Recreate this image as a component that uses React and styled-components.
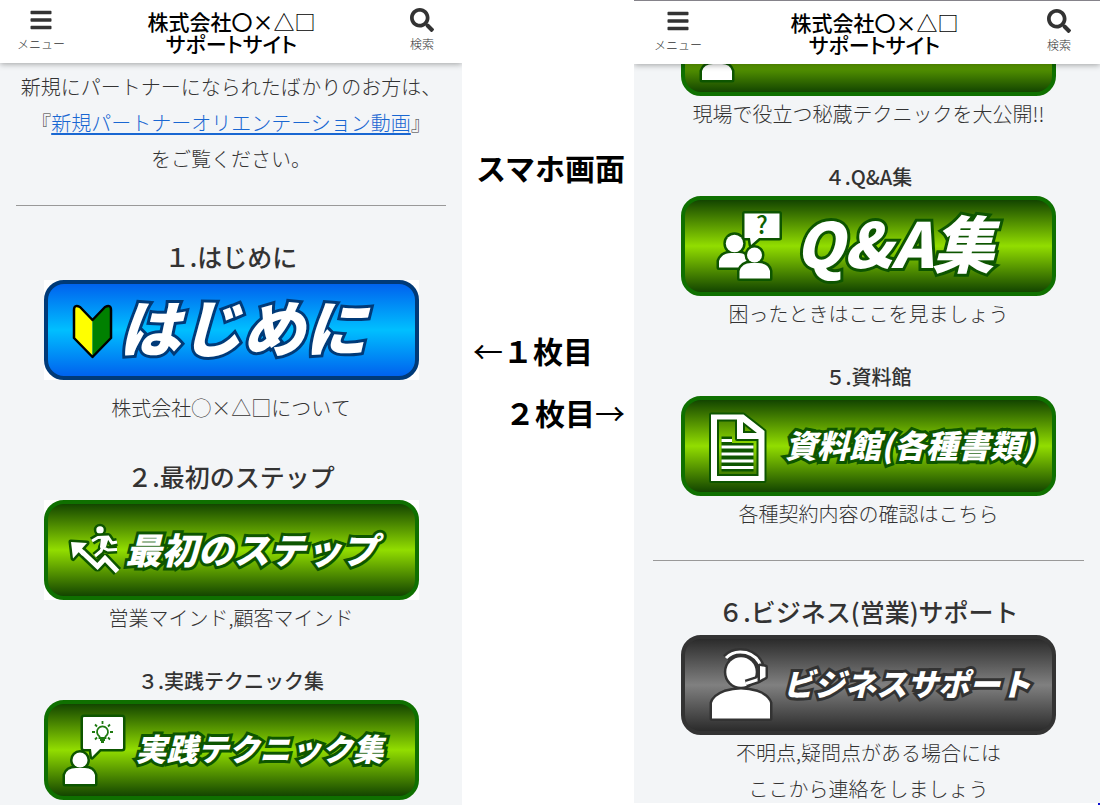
import React from 'react';
import styled, { createGlobalStyle, css } from 'styled-components';
import { FaBars, FaSearch } from 'react-icons/fa';

const GlobalStyle = createGlobalStyle`
  * {
    box-sizing: border-box;
  }

  body {
    margin: 0;
    background: #fff;
    color: #333;
    font-family: 'Noto Sans CJK JP', sans-serif;
  }
`;

const themes = {
  blue: { edge: '#003a78', dark: '#0062ee', light: '#00bfff' },
  green: { edge: '#0f7000', dark: '#134500', light: '#92dd00', outline: '#0d5500' },
  gray: { edge: '#333333', dark: '#2b2b2b', light: '#808080' },
};

const Page = styled.main`
  display: grid;
  grid-template-columns: minmax(0, 462fr) minmax(0, 172fr) minmax(0, 466fr);
  height: 100vh;
  overflow: hidden;
`;

const Screen = styled.section`
  display: flex;
  flex-direction: column;
  overflow: hidden;
  background: #f3f5f7;
  ${(props) =>
    props.$second &&
    css`
      margin-bottom: 2px;
      padding-left: 3px;
      border-top: 1px solid #85838a;
    `}
`;

const Header = styled.header`
  position: relative;
  z-index: 1;
  display: flex;
  flex: none;
  align-items: center;
  justify-content: space-between;
  height: 63px;
  padding: 0 15px 0 16px;
  background: #fff;
  box-shadow: 0 1px 6px rgba(0, 0, 0, 0.35);
  ${(props) =>
    props.$second &&
    css`
      margin-left: -3px;
      padding: 0 16px 0 19px;
    `}
`;

const HeaderButton = styled.button`
  display: flex;
  flex-direction: column;
  align-items: center;
  gap: 4px;
  width: 50px;
  padding: 0 0 3px;
  border: none;
  background: none;
  color: #333;
  font-family: inherit;
  font-size: 12px;
  font-weight: 300;
  line-height: 16px;
  white-space: nowrap;
  cursor: pointer;
`;

const SiteTitle = styled.h1`
  margin: 0;
  padding-left: ${(props) => (props.$second ? '12px' : '0')};
  color: #000;
  font-size: 21px;
  font-weight: 500;
  line-height: 22px;
  text-align: center;
  font-feature-settings: 'palt';
`;

const Content = styled.div`
  flex: none;
  padding: 6px 16px 0;
  text-align: center;
  ${(props) =>
    props.$second &&
    css`
      margin-top: -68px;
      padding-top: 0;
    `}
`;

const Text = styled.p`
  margin: ${(props) => (props.$spaced ? '10px' : '0')} 0 0;
  font-size: 20px;
  font-weight: 300;
  line-height: 36px;
`;

const TextLink = styled.a`
  color: #1967d2;
  text-underline-offset: 2px;
`;

const Divider = styled.hr`
  height: 1px;
  margin: 28px 0 34px;
  border: none;
  background: #999;
`;

const Heading = styled.h2`
  margin: ${(props) => (props.$first ? '0' : '34px')} 0 8px;
  font-size: 25px;
  font-weight: 500;
  line-height: 32px;
`;

const SubHeading = styled.h3`
  margin: 30px 0 4px;
  font-size: 20px;
  font-weight: 500;
  line-height: 30px;
`;

const BannerFrame = styled.div`
  max-width: 375px;
  margin: 0 auto;
  background: ${(props) => (props.$matte ? '#fff' : 'transparent')};
`;

const BannerLink = styled.a`
  display: flex;
  align-items: center;
  height: 100px;
  overflow: hidden;
  border: 4px solid ${(props) => props.$colors.edge};
  border-radius: 20px;
  background: linear-gradient(
    ${(props) => props.$colors.dark},
    ${(props) => props.$colors.light} 50%,
    ${(props) => props.$colors.dark}
  );
  text-decoration: none;

  svg {
    flex: none;
  }
`;

const BannerLabel = styled.span`
  padding-bottom: ${(props) => (props.$size > 50 ? '10px' : '4px')};
  color: #fff;
  font-size: ${(props) => props.$size}px;
  font-style: italic;
  font-weight: 900;
  line-height: 80px;
  white-space: nowrap;
  -webkit-text-stroke: 6px ${(props) => props.$colors.outline || props.$colors.edge};
  paint-order: stroke fill;
`;

const Notes = styled.aside`
  display: flex;
  flex-direction: column;
  padding: 146px 9px 0 11px;
  color: #000;
  font-size: 30px;
  font-weight: 700;
  line-height: 42px;
  white-space: nowrap;
`;

const NotesTitle = styled.h2`
  margin: 0 0 141px;
  font-size: inherit;
  line-height: inherit;
  text-align: right;
`;

const Note = styled.p`
  margin: 0 0 20px;
  text-align: ${(props) => (props.$right ? 'right' : 'left')};
`;

const Arrow = styled.span`
  font-weight: 400;
`;

const CornerMark = styled.span`
  position: absolute;
  right: 0;
  bottom: 0;
  width: 2px;
  height: 2px;
  background: #1010d0;
`;

// draws its shapes twice: a wide dark outline first, then the white drawing
const Outlined = ({ color, children, line = 0 }) => (
  <>
    <g fill={line ? 'none' : color} stroke={color} strokeWidth={line + 5} strokeLinejoin="round">
      {children}
    </g>
    <g fill={line ? 'none' : '#fff'} stroke={line ? '#fff' : 'none'} strokeWidth={line}>
      {children}
    </g>
  </>
);

const LeafIcon = () => (
  <svg width="71" height="92" viewBox="0 0 71 92" aria-hidden="true">
    <path d="M44.500 36 32 23Q26 20 26 26V54L44.500 73Z" fill="#ff0" />
    <path d="M44.500 36 57 23Q63 20 63 26V54L44.500 73Z" fill="#008000" />
    <path
      d="M44.500 36 32 23Q26 20 26 26V54L44.500 73 63 54V26Q63 20 57 23Z"
      fill="none"
      stroke="#000"
      strokeWidth="2.500"
      strokeLinejoin="round"
    />
  </svg>
);

const StepIcon = () => (
  <svg width="78" height="92" viewBox="0 0 78 92" aria-hidden="true">
    <Outlined color="#0d5500" line={5}>
      <path d="M30 44 49.500 62.500 57 54.500 69.500 67.500" />
    </Outlined>
    <Outlined color="#0d5500">
      <path d="M23 38 39 39 25 54.500Z" />
      <circle cx="52" cy="26" r="3.700" />
    </Outlined>
    <path d="M30 44 36 50" stroke="#fff" strokeWidth="5" />
    <Outlined color="#0d5500" line={3}>
      <path d="M44 37 50 33.500 60 33 64 39 69 38M59 33 54 43 60 46 69 45.500M55 42 53 47 47 52" />
    </Outlined>
    <path d="M53 33 61 33 58 43 52 43Z" fill="#fff" />
  </svg>
);

const IdeaIcon = () => (
  <svg width="88" height="92" viewBox="0 0 88 92" aria-hidden="true">
    <Outlined color="#0d5500">
      <path d="M36 13H74Q75 13 75 14V44Q75 45 74 45H52L44 53 43 45H36Q35 45 35 44V14Q35 13 36 13Z" />
    </Outlined>
    <Outlined color="#0d5500">
      <path d="M17 80V71Q19 64 28 64H37Q45 64 47 71V80Z" />
      <circle cx="32" cy="56" r="7.500" />
    </Outlined>
    <g fill="none" stroke="#1f7a10" strokeWidth="1.800">
      <path d="M51.500 34V32.500A5.500 5.500 0 1 1 57.500 32.500V34ZM52 36H57M53 38H56" />
      <path d="M54.500 17V20M47 20.500 49 22.500M62 20.500 60 22.500M44 28H47M62 28H65M47 35.500 49 33.500M62 35.500 60 33.500" />
    </g>
  </svg>
);

const QuestionIcon = () => (
  <svg width="110" height="92" viewBox="0 0 110 92" aria-hidden="true">
    <Outlined color="#0d5500">
      <path d="M59.500 13.500H94.500V38H74L66 45 65 38H59.500Z" />
    </Outlined>
    <text
      x="77"
      y="34"
      fill="#0d6000"
      fontFamily="Noto Sans CJK JP, sans-serif"
      fontSize="24"
      fontWeight="500"
      textAnchor="middle"
    >
      ?
    </text>
    <Outlined color="#0d5500">
      <path d="M34 67.500V61Q37 53 46 53H54Q61 53 63 60V67.500Z" />
      <circle cx="49.500" cy="43.500" r="8.700" />
    </Outlined>
    <Outlined color="#0d5500">
      <path d="M54.500 78.500V71Q57 63 66 63H73Q83 63 85 71V78.500Z" />
      <circle cx="69.500" cy="55" r="7.500" />
    </Outlined>
  </svg>
);

const DocumentIcon = () => (
  <svg width="100" height="92" viewBox="0 0 100 92" aria-hidden="true">
    <path
      d="M26 14.500H58.500L79.500 31V81H26ZM32 19.500V76H73.500V39H52V19.500ZM58 22V33H72Z"
      fill="#fff"
      fillRule="evenodd"
      stroke="#0d5500"
      strokeWidth="4"
      strokeLinejoin="round"
      paintOrder="stroke"
    />
    <Outlined color="#0d5500" line={3}>
      <path d="M36.500 40.500H47M36.500 47H68.500M36.500 54H68.500M36.500 61H68.500M36.500 67.500H68.500" />
    </Outlined>
  </svg>
);

const OperatorIcon = () => (
  <svg width="98" height="92" viewBox="0 0 98 92" aria-hidden="true">
    <Outlined color="#333">
      <path d="M27 79.500V64Q29 57 40 53Q56 48 72 53Q83 57 85 64V79.500Z" />
      <circle cx="56" cy="33" r="14.700" />
    </Outlined>
    <Outlined color="#333" line={3}>
      <path d="M41 19Q48 11 61 13.500Q73 17 76 28M76 38 72 41 61 44.500" />
    </Outlined>
    <Outlined color="#333">
      <path d="M75 27 80.500 28V38L75 41Z" />
    </Outlined>
  </svg>
);

const Banner = ({ color, icon, label, size, matte }) => (
  <BannerFrame $matte={matte}>
    <BannerLink href="#" $colors={themes[color]}>
      {icon}
      {label && (
        <BannerLabel $colors={themes[color]} $size={size}>
          {label}
        </BannerLabel>
      )}
    </BannerLink>
  </BannerFrame>
);

const SiteHeader = ({ second }) => (
  <Header $second={second}>
    <HeaderButton type="button">
      <FaBars size={24} />
      メニュー
    </HeaderButton>
    <SiteTitle $second={second}>
      株式会社〇×△□
      <br />
      サポートサイト
    </SiteTitle>
    <HeaderButton type="button">
      <FaSearch size={24} />
      検索
    </HeaderButton>
  </Header>
);

const App = () => (
  <>
    <GlobalStyle />
    <Page>
      <Screen>
        <SiteHeader />
        <Content>
          <Text>
            新規にパートナーになられたばかりのお方は、
            <br />
            『<TextLink href="#">新規パートナーオリエンテーション動画</TextLink>』
            <br />
            をご覧ください。
          </Text>
          <Divider />
          <Heading $first>１.はじめに</Heading>
          <Banner color="blue" icon={<LeafIcon />} label="はじめに" size={62} matte />
          <Text $spaced>株式会社◯×△□について</Text>
          <Heading>２.最初のステップ</Heading>
          <Banner color="green" icon={<StepIcon />} label="最初のステップ" size={36} matte />
          <Text>営業マインド,顧客マインド</Text>
          <SubHeading>３.実践テクニック集</SubHeading>
          <Banner color="green" icon={<IdeaIcon />} label="実践テクニック集" size={31} />
        </Content>
      </Screen>

      <Notes>
        <NotesTitle>スマホ画面</NotesTitle>
        <Note>
          <Arrow>←</Arrow>１枚目
        </Note>
        <Note $right>
          ２枚目<Arrow>→</Arrow>
        </Note>
      </Notes>

      <Screen $second>
        <SiteHeader second />
        <Content $second>
          {/* scrolled under the header, only its lower edge shows */}
          <Banner color="green" icon={<IdeaIcon />} />
          <Text>現場で役立つ秘蔵テクニックを大公開!!</Text>
          <SubHeading>４.Q&amp;A集</SubHeading>
          <Banner color="green" icon={<QuestionIcon />} label="Q&amp;A集" size={62} />
          <Text>困ったときはここを見ましょう</Text>
          <SubHeading>５.資料館</SubHeading>
          <Banner color="green" icon={<DocumentIcon />} label="資料館(各種書類)" size={32} />
          <Text>各種契約内容の確認はこちら</Text>
          <Divider />
          <Heading $first>６.ビジネス(営業)サポート</Heading>
          <Banner color="gray" icon={<OperatorIcon />} label="ビジネスサポート" size={31} />
          <Text>
            不明点,疑問点がある場合には
            <br />
            ここから連絡をしましょう
          </Text>
        </Content>
      </Screen>
    </Page>
    <CornerMark />
  </>
);

export default App;
